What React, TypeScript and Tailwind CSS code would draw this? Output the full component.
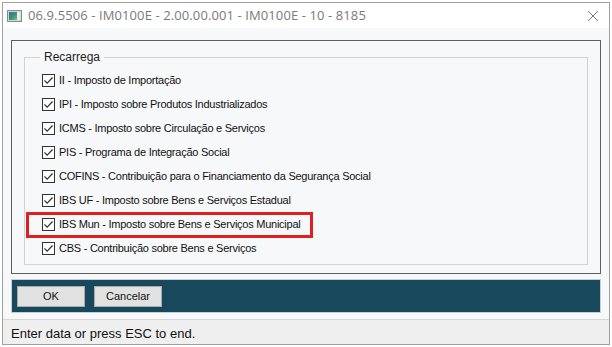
import React from "react";

const items = [
  "II - Imposto de Importação",
  "IPI - Imposto sobre Produtos Industrializados",
  "ICMS - Imposto sobre Circulação e Serviços",
  "PIS - Programa de Integração Social",
  "COFINS - Contribuição para o Financiamento da Segurança Social",
  "IBS UF - Imposto sobre Bens e Serviços Estadual",
  "IBS Mun - Imposto sobre Bens e Serviços Municipal",
  "CBS - Contribuição sobre Bens e Serviços",
];

function Check() {
  return (
    <span className="flex h-[13px] w-[13px] shrink-0 items-center justify-center border border-[#333] bg-white">
      <svg width="11" height="11" viewBox="0 0 11 11">
        <path d="M1.5 5.5 L4.2 8.2 L9.5 2.5" fill="none" stroke="#333" strokeWidth="1.2" />
      </svg>
    </span>
  );
}

function AppIcon() {
  return (
    <span className="flex h-[12px] w-[15px] border border-[#8a8a8a] bg-[#cfd6dc] p-[1px]">
      <span className="h-full w-[8px] bg-gradient-to-br from-[#2f6fa8] via-[#3a8d7a] to-[#7ac06a]" />
      <span className="h-full flex-1 bg-[#e8eef2]" />
    </span>
  );
}

export default function App() {
  return (
    <div className="h-[347px] w-[612px] bg-white p-[2px] font-['Liberation_Sans',sans-serif]">
      <div className="flex h-full flex-col border border-[#a0a0a0] bg-[#f7f8fa]">
        {/* title bar */}
        <div className="flex h-[25px] items-center bg-white pl-[4px] pr-[10px] pt-[1px]">
          <AppIcon />
          <span className="ml-[6px] font-['Open_Sans',sans-serif] text-[13px] tracking-[0.1px] text-[#7a7a7a]">
            06.9.5506 - IM0100E - 2.00.00.001 - IM0100E - 10 - 8185
          </span>
          <svg className="ml-auto" width="12" height="12" viewBox="0 0 12 12">
            <path d="M1 1 L11 11 M11 1 L1 11" stroke="#777" strokeWidth="1" />
          </svg>
        </div>

        <div className="flex-1 px-[8px] pt-[12px]">
          <div className="h-[234px] border border-[#5f5f5f] bg-[#f7f8fa] px-[12px] pt-[16px]">
            <div className="relative h-[208px] border border-[#d2d2d2] pl-[17px] pt-[10px]">
              <span className="absolute -top-[8px] left-[15px] bg-[#f7f8fa] px-[4px] text-[12px] leading-[15px] text-[#222]">
                Recarrega
              </span>
              <div className="flex flex-col">
                {items.map((t, i) => (
                  <div key={i} className="relative flex h-[24px] items-center gap-[4px] text-[11px] text-[#111]">
                    <Check />
                    <span className="tracking-[-0.25px]">{t}</span>
                    {i === 6 && (
                      <span className="absolute -left-[16px] top-[0px] h-[26px] w-[287px] border-[3px] border-[#e0201f]" />
                    )}
                  </div>
                ))}
              </div>
            </div>
          </div>

          {/* button bar */}
          <div className="mt-[5px] flex h-[34px] items-center gap-[9px] border border-[#c8cfd4] bg-[#18485b] px-[5px] pt-[1px]">
            <button className="h-[21px] w-[68px] border border-[#adadad] bg-[#e1e1e1] text-[11px] text-[#111]">OK</button>
            <button className="h-[21px] w-[68px] border border-[#adadad] bg-[#e1e1e1] text-[11px] text-[#111]">Cancelar</button>
          </div>
        </div>

        {/* status bar */}
        <div className="mt-[3px] h-[25px] border-t border-[#d6d6d6] bg-[#efefef] pl-[8px] pt-[4px] text-[13px] text-[#111]">
          Enter data or press ESC to end.
        </div>
      </div>
    </div>
  );
}
